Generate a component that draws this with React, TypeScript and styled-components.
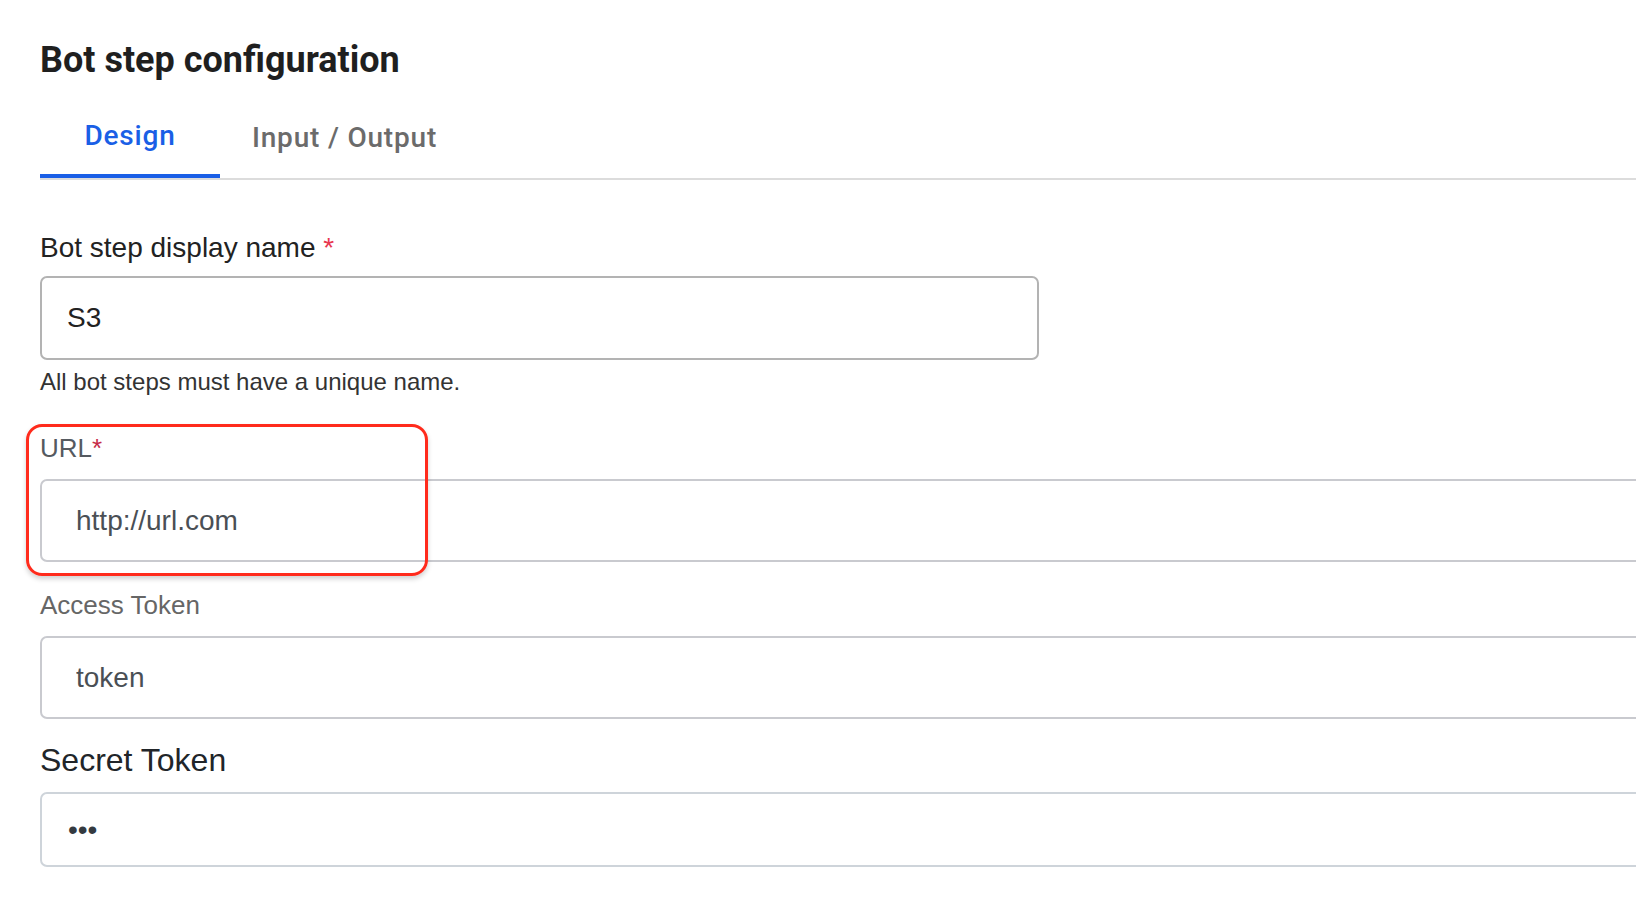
import React, { useState } from "react";
import styled, { createGlobalStyle } from "styled-components";

const GlobalStyle = createGlobalStyle`
  body {
    margin: 0;
    background: #ffffff;
    overflow: hidden;
  }
`;

const Page = styled.div`
  padding: 38px 0 0 40px;
  font-family: "Liberation Sans", Arial, sans-serif;
`;

const Title = styled.h1`
  margin: 0;
  font-family: Roboto, "Liberation Sans", sans-serif;
  font-weight: 700;
  font-size: 36px;
  line-height: 44px;
  color: #1f1f1f;
`;

const TabList = styled.div`
  display: flex;
  border-bottom: 2px solid #dcdcdc;
`;

const Tab = styled.div<{ $active?: boolean }>`
  position: relative;
  box-sizing: border-box;
  min-width: 180px;
  height: 96px;
  padding: ${(p) => (p.$active ? "37px" : "39px")} 32px 0;
  font-family: Roboto, "Liberation Sans", sans-serif;
  font-weight: 500;
  font-size: 28px;
  line-height: 34px;
  letter-spacing: 0.8px;
  text-align: center;
  color: ${(p) => (p.$active ? "#1a5fe6" : "#6b6b6b")};
  cursor: pointer;

  &::after {
    content: "";
    display: ${(p) => (p.$active ? "block" : "none")};
    position: absolute;
    left: 0;
    right: 0;
    bottom: 0;
    height: 4px;
    background: #1a5fe6;
  }
`;

const Form = styled.div`
  display: flex;
  flex-direction: column;
  padding-top: 52px;
`;

const Field = styled.div<{ $gap: number; $mt?: number; $mb: number }>`
  position: relative;
  display: flex;
  flex-direction: column;
  gap: ${(p) => p.$gap}px;
  margin-top: ${(p) => p.$mt ?? 0}px;
  margin-bottom: ${(p) => p.$mb}px;
`;

const Label = styled.label<{ $size: number; $lh: number; $color: string }>`
  font-size: ${(p) => p.$size}px;
  line-height: ${(p) => p.$lh}px;
  color: ${(p) => p.$color};
`;

const Required = styled.span<{ $color: string }>`
  color: ${(p) => p.$color};
`;

const TextInput = styled.input<{
  $width: number;
  $height: number;
  $inset: number;
  $border: string;
  $color: string;
}>`
  box-sizing: border-box;
  width: ${(p) => p.$width}px;
  height: ${(p) => p.$height}px;
  padding: 0 0 0 ${(p) => p.$inset}px;
  border: 2px solid ${(p) => p.$border};
  border-radius: 7px;
  background: #ffffff;
  font-family: "Liberation Sans", Arial, sans-serif;
  font-size: 28px;
  color: ${(p) => p.$color};
  outline: none;
`;

const Helper = styled.div`
  margin-top: 8px;
  font-size: 24px;
  line-height: 28px;
  color: #333333;
`;

// red callout ring drawn over the URL field
const Callout = styled.div`
  position: absolute;
  left: -14px;
  top: -9px;
  width: 402px;
  height: 152px;
  box-sizing: border-box;
  border: 3px solid #ff2b1c;
  border-radius: 16px;
  box-shadow: 0 3px 5px rgba(0, 0, 0, 0.18);
  pointer-events: none;
`;

const App = () => {
  const [tab, setTab] = useState<"design" | "io">("design");

  return (
    <Page>
      <GlobalStyle />
      <Title>Bot step configuration</Title>
      <TabList>
        <Tab $active={tab === "design"} onClick={() => setTab("design")}>
          Design
        </Tab>
        <Tab $active={tab === "io"} onClick={() => setTab("io")}>
          Input / Output
        </Tab>
      </TabList>

      <Form>
        <Field $gap={12} $mb={0}>
          <Label $size={28} $lh={32} $color="#222222">
            Bot step display name <Required $color="#e8374f">*</Required>
          </Label>
          <TextInput
            readOnly
            value="S3"
            $width={999}
            $height={84}
            $inset={25}
            $border="#b3b3b3"
            $color="#222222"
          />
        </Field>
        <Helper>All bot steps must have a unique name.</Helper>

        <Field $gap={16} $mt={37} $mb={28}>
          <Label $size={26} $lh={30} $color="#555a60">
            URL<Required $color="#c62a47">*</Required>
          </Label>
          <TextInput
            readOnly
            value="http://url.com"
            $width={1700}
            $height={83}
            $inset={34}
            $border="#c9cacf"
            $color="#4a4f55"
          />
          <Callout />
        </Field>

        <Field $gap={16} $mb={23}>
          <Label $size={26} $lh={30} $color="#666666">
            Access Token
          </Label>
          <TextInput
            readOnly
            value="token"
            $width={1700}
            $height={83}
            $inset={34}
            $border="#c9cacf"
            $color="#4a4f55"
          />
        </Field>

        <Field $gap={13} $mb={0}>
          <Label $size={32} $lh={37} $color="#212529">
            Secret Token
          </Label>
          <TextInput
            readOnly
            type="password"
            value="abc"
            $width={1700}
            $height={75}
            $inset={26}
            $border="#ced4da"
            $color="#343a40"
          />
        </Field>
      </Form>
    </Page>
  );
};

export default App;
